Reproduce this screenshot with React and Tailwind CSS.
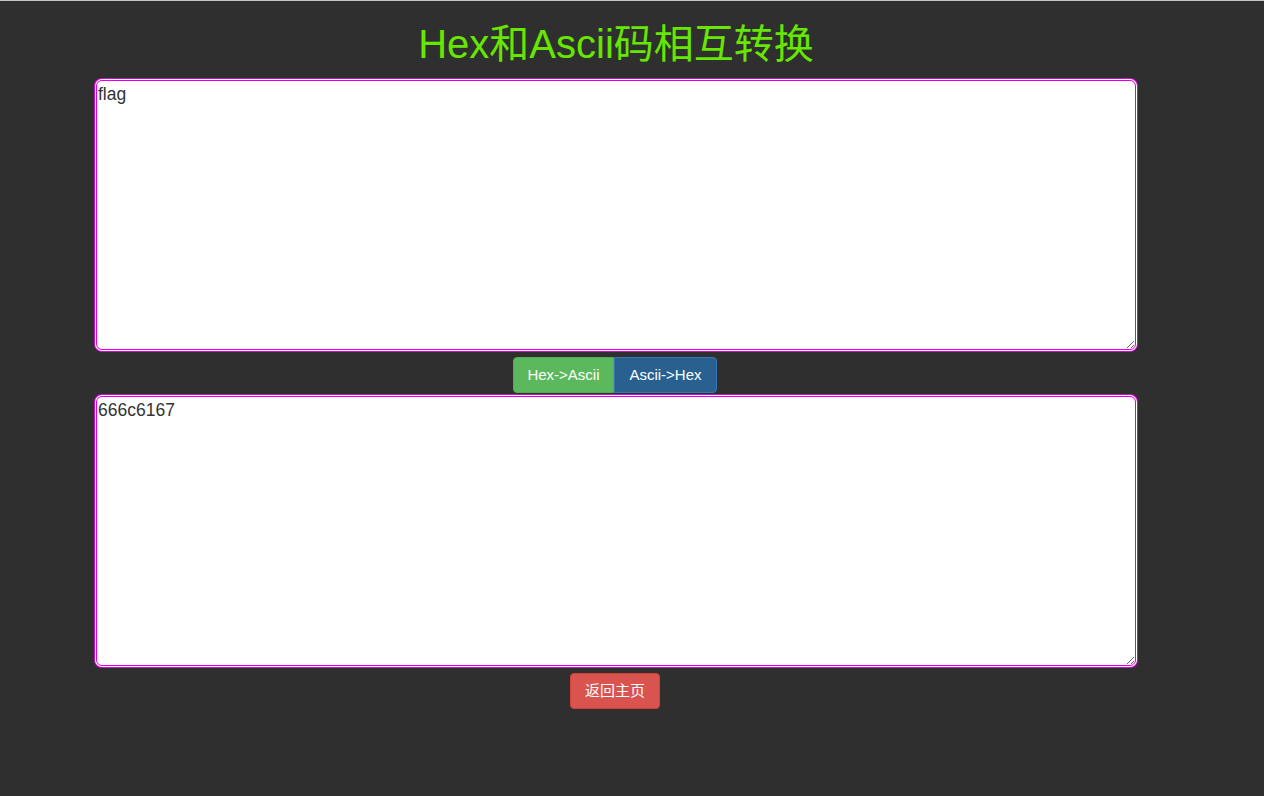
import React from "react";

export default function App() {
  return (
    <div className="min-h-[796px] w-full bg-[#2f2f2f] border-t border-[#c4c4c4] font-['Liberation_Sans',Arial,'Noto_Sans_CJK_SC',sans-serif]">
      <div className="w-[1232px] flex flex-col items-center">
        <h1 className="mt-[21px] text-[40px] leading-[44px] text-[#66e600] font-normal">
          Hex和Ascii码相互转换
        </h1>
        <textarea
          defaultValue="flag"
          className="mt-[14px] w-[1040px] h-[270px] rounded-[6px] border border-[#dd00dd] bg-white text-[#333333] text-[17.5px] leading-[20px] px-[1px] py-[3px] outline-none shadow-[0_0_0_1px_#ffffff,0_0_0_2px_#dd00dd]"
        />
        <div className="mt-[7px] flex h-[36px] -translate-x-px">
          <button className="w-[101px] h-[36px] bg-[#5cb85c] border border-[#4cae4c] rounded-l-[4px] text-white text-[15px]">
            Hex-&gt;Ascii
          </button>
          <button className="w-[103px] h-[36px] bg-[#286090] border border-[#3a74b6] rounded-r-[4px] text-white text-[15px]">
            Ascii-&gt;Hex
          </button>
        </div>
        <textarea
          defaultValue="666c6167"
          className="mt-[3px] w-[1040px] h-[270px] rounded-[6px] border border-[#dd00dd] bg-white text-[#333333] text-[17.5px] leading-[20px] px-[1px] py-[3px] outline-none shadow-[0_0_0_1px_#ffffff,0_0_0_2px_#dd00dd]"
        />
        <button className="mt-[7px] w-[90px] h-[36px] bg-[#d9534f] border border-[#d43f3a] rounded-[4px] text-white text-[15px] -translate-x-px">
          返回主页
        </button>
      </div>
    </div>
  );
}
